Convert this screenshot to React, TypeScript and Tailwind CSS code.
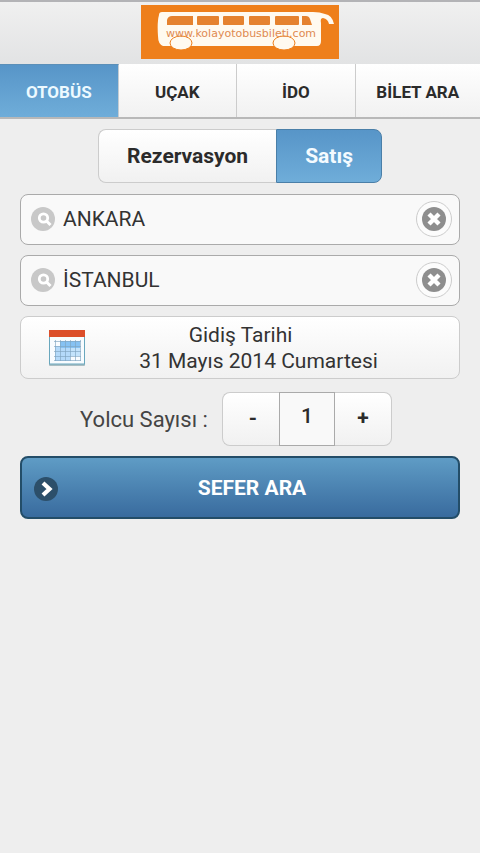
import { useState } from "react";

const tabs = ["OTOBÜS", "UÇAK", "İDO", "BİLET ARA"];
const modes = ["Rezervasyon", "Satış"];

function BusLogo() {
  return (
    <svg width="198" height="54" viewBox="0 0 198 54" role="img" aria-label="Kolay Otobüs Bileti">
      <rect width="198" height="54" fill="#ee7f1b" />
      <path
        d="M21 7H172Q179 7 184 9Q191 10 193 19H188Q187 14 182 13Q179 13 180 18V36Q180 41 176 41H22Q17 39 17 31Q16 17 18 10Q18 7 21 7Z"
        fill="#fffaf0"
      />
      <g fill="#e5822f">
        <path d="M31 11H52V20H26V15Q27 11 31 11Z" />
        <rect x="56" y="11" width="22" height="9" rx="1" />
        <rect x="82" y="11" width="21" height="9" rx="1" />
        <rect x="108" y="11" width="21" height="9" rx="1" />
        <rect x="134" y="11" width="24" height="9" rx="1" />
        <path d="M161 11H165Q168 11 169 14L171 20H161Z" />
      </g>
      <g fill="#fffaf0" stroke="#ee7f1b" strokeWidth="1">
        <ellipse cx="40" cy="38" rx="11" ry="7" />
        <ellipse cx="143" cy="38" rx="11" ry="7" />
      </g>
      <text x="100" y="32" textAnchor="middle" fontSize="11" fill="#e08a52" fontFamily="'DejaVu Sans', sans-serif">
        www.kolayotobusbileti.com
      </text>
    </svg>
  );
}

function SearchIcon() {
  return (
    <svg className="shrink-0" width="24" height="24" viewBox="0 0 24 24" aria-hidden="true">
      <circle cx="12" cy="12" r="12" fill="#c8c8c8" />
      <circle cx="12.5" cy="11" r="4.2" fill="none" stroke="#fff" strokeWidth="2.8" />
      <path d="M15.5 14L19.5 18" stroke="#fff" strokeWidth="3" />
    </svg>
  );
}

function ClearIcon() {
  return (
    <svg width="24" height="24" viewBox="0 0 24 24" aria-hidden="true">
      <circle cx="12" cy="12" r="12" fill="#8e8e8e" />
      <path d="M7 7L17 17M17 7L7 17" stroke="#fff" strokeWidth="4.4" />
    </svg>
  );
}

function CalendarIcon() {
  return (
    <svg className="shrink-0" width="38" height="38" viewBox="0 0 38 38" aria-hidden="true">
      <rect x="1" y="34" width="36" height="3" rx="1" fill="#a9bdc2" />
      <rect x="1.5" y="2" width="35" height="33" fill="#f8fcff" stroke="#69a7bd" />
      <rect x="1" y="1" width="36" height="7" fill="#dc4f2b" />
      <rect x="12" y="12" width="20" height="15" fill="#c3e3fb" />
      <rect x="7" y="17" width="15" height="15" fill="#b4dafa" />
      <rect x="12" y="12" width="20" height="7" fill="#86c2f3" />
      <path
        d="M7.5 11V32M12.5 11V32M17.5 11V32M22.5 11V32M27.5 11V32M32.5 11V32M6 12.5H33M6 17.5H33M6 22.5H33M6 27.5H33M6 31.5H33"
        fill="none"
        stroke="#7fa5c0"
        strokeOpacity="0.65"
      />
    </svg>
  );
}

interface CityFieldProps {
  label: string;
  value: string;
  onChange: (value: string) => void;
}

function CityField({ label, value, onChange }: CityFieldProps) {
  return (
    <div className="flex h-[51px] items-center gap-2 rounded-lg border border-[#aaa] bg-[#f9f9f9] pb-0.5 pl-2.5 pr-[7px]">
      <SearchIcon />
      <input
        type="text"
        aria-label={label}
        value={value}
        onChange={(e) => onChange(e.target.value)}
        className="min-w-0 flex-1 bg-transparent text-[21px] leading-7 text-[#333] outline-none"
      />
      <button
        type="button"
        aria-label={`${label} temizle`}
        onClick={() => onChange("")}
        className="flex size-9 shrink-0 items-center justify-center rounded-full border border-[#ccc] bg-[#fcfcfc]"
      >
        <ClearIcon />
      </button>
    </div>
  );
}

export default function App() {
  const [tab, setTab] = useState("OTOBÜS");
  const [mode, setMode] = useState("Satış");
  const [from, setFrom] = useState("ANKARA");
  const [to, setTo] = useState("İSTANBUL");
  const [count, setCount] = useState(1);

  return (
    <div className="min-h-screen bg-[#eee] font-[Roboto,sans-serif] text-[#2b2b2b]">
      <header className="flex h-16 justify-center border-t-2 border-[#b3b3b6] bg-linear-to-b from-[#f0f0f0] to-[#e2e3e4] pt-[3px]">
        <BusLogo />
      </header>

      {/* Tabs */}
      <nav className="grid h-[55px] grid-cols-[20fr_20fr_20fr_21fr] border-b-2 border-[#b8b8b8]">
        {tabs.map((item) => (
          <button
            key={item}
            type="button"
            onClick={() => setTab(item)}
            className={`whitespace-nowrap border-r pt-1 text-[17px] font-bold ${
              tab === item
                ? "border-[#c4ccd2] border-t border-t-[#5b8fb8] bg-linear-to-b from-[#5795c8] to-[#6fadd9] text-[#edfaff]"
                : "border-[#ccc] bg-linear-to-b from-white to-[#f1f1f1] last:border-r-0"
            }`}
          >
            {item}
          </button>
        ))}
      </nav>

      <main className="px-5 pt-2.5">
        {/* Reservation / sale switch */}
        <div className="flex justify-center">
          {modes.map((item) => (
            <button
              key={item}
              type="button"
              aria-pressed={mode === item}
              onClick={() => setMode(item)}
              className={`h-[54px] border px-7 pt-0.5 text-[21px] font-bold first:rounded-l-lg first:border-r-0 last:rounded-r-lg ${
                mode === item
                  ? "border-[#4a7fa8] bg-linear-to-b from-[#5795c8] to-[#6fadd9] text-[#f4fbff]"
                  : "border-[#ccc] bg-linear-to-b from-white to-[#f1f1f1]"
              }`}
            >
              {item}
            </button>
          ))}
        </div>

        <div className="mt-[11px] flex flex-col gap-2.5">
          <CityField label="Nereden" value={from} onChange={setFrom} />
          <CityField label="Nereye" value={to} onChange={setTo} />
          <button
            type="button"
            className="flex h-[63px] items-center rounded-lg border border-[#ccc] bg-linear-to-b from-white to-[#f1f1f1] pl-[27px] pr-16 text-[21px] leading-[26px] text-[#333]"
          >
            <CalendarIcon />
            <span className="flex flex-1 flex-col items-center">
              <span>Gidiş Tarihi</span>
              <span className="pl-9">31 Mayıs 2014 Cumartesi</span>
            </span>
          </button>
        </div>

        {/* Passenger count */}
        <div className="mt-[13px] flex items-center justify-center gap-3.5 pr-2">
          <label htmlFor="passengers" className="text-[22px] text-[#444]">
            Yolcu Sayısı :
          </label>
          <div className="flex h-[54px] text-[21px] font-bold">
            <button
              type="button"
              aria-label="Azalt"
              onClick={() => setCount(Math.max(1, count - 1))}
              className="w-[57px] rounded-l-lg border border-r-0 border-[#ccc] bg-linear-to-b from-white to-[#f1f1f1] pl-1"
            >
              -
            </button>
            <input
              id="passengers"
              type="text"
              readOnly
              value={count}
              className="w-14 border border-[#aaa] bg-[#f9f9f9] pb-1 text-center font-medium outline-none"
            />
            <button
              type="button"
              aria-label="Artır"
              onClick={() => setCount(count + 1)}
              className="w-[57px] rounded-r-lg border border-l-0 border-[#ccc] bg-linear-to-b from-white to-[#f1f1f1]"
            >
              +
            </button>
          </div>
        </div>

        <button
          type="button"
          className="mt-2.5 flex h-[63px] w-full items-center rounded-lg border-2 border-[#234d68] bg-linear-to-b from-[#5f9cc5] to-[#396b9e] px-3 pt-0.5 text-[21px] font-bold text-white"
        >
          <svg className="shrink-0" width="24" height="24" viewBox="0 0 24 24" aria-hidden="true">
            <circle cx="12" cy="12" r="12" fill="#2c4f6a" />
            <path d="M9 6L15.5 12L9 18" fill="none" stroke="#fff" strokeWidth="4.2" />
          </svg>
          <span className="flex-1">SEFER ARA</span>
        </button>
      </main>
    </div>
  );
}
